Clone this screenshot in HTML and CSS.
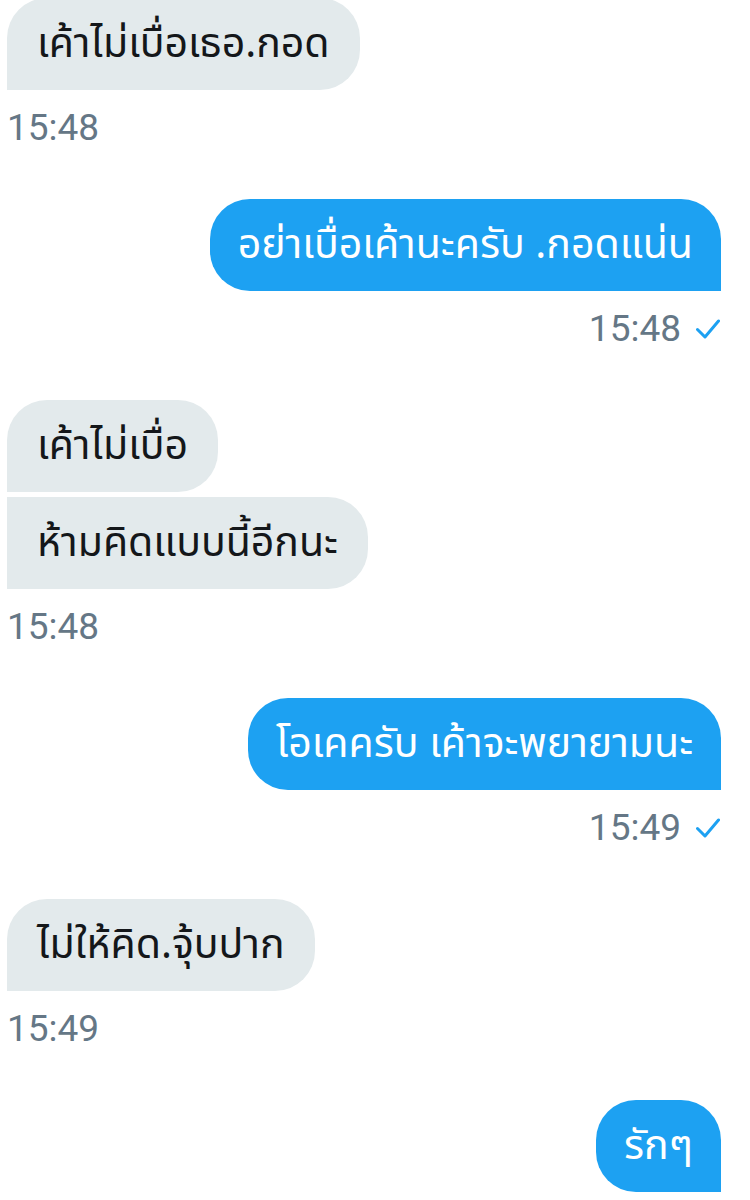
FILE: index.html
```html
<!DOCTYPE html>
<html lang="th">
<head>
<meta charset="utf-8">
<title>Chat</title>
<link rel="stylesheet" href="styles.css">
</head>
<body>
<div class="thread">
  <div class="group in">
    <div class="bubble first">เค้าไม่เบื่อเธอ.กอด</div>
    <div class="meta"><span class="time">15:48</span></div>
  </div>
  <div class="group out">
    <div class="bubble">อย่าเบื่อเค้านะครับ .กอดแน่น</div>
    <div class="meta"><span class="time">15:48</span><svg class="tick" viewBox="0 0 24 20" width="24" height="20"><path d="M1.5 10.5 L9 18 L22.5 2" fill="none" stroke="#1da1f2" stroke-width="3" stroke-linecap="round" stroke-linejoin="round"/></svg></div>
  </div>
  <div class="group in">
    <div class="bubble first">เค้าไม่เบื่อ</div>
    <div class="bubble">ห้ามคิดแบบนี้อีกนะ</div>
    <div class="meta"><span class="time">15:48</span></div>
  </div>
  <div class="group out">
    <div class="bubble">โอเคครับ เค้าจะพยายามนะ</div>
    <div class="meta"><span class="time">15:49</span><svg class="tick" viewBox="0 0 24 20" width="24" height="20"><path d="M1.5 10.5 L9 18 L22.5 2" fill="none" stroke="#1da1f2" stroke-width="3" stroke-linecap="round" stroke-linejoin="round"/></svg></div>
  </div>
  <div class="group in">
    <div class="bubble first">ไม่ให้คิด.จุ้บปาก</div>
    <div class="meta"><span class="time">15:49</span></div>
  </div>
  <div class="group out">
    <div class="bubble">รักๆ</div>
  </div>
</div>
</body>
</html>
```
FILE: styles.css
```css
html, body {
  margin: 0;
  padding: 0;
  background: #ffffff;
}
body {
  font-family: "Noto Sans Thai", "Noto Sans Thai UI", "Noto Sans", Roboto, sans-serif;
  overflow: hidden;
}
.thread {
  display: flex;
  flex-direction: column;
  gap: 51px;
  padding: 0 29px 0 7px;
  margin-top: -2px;
}
.group {
  display: flex;
  flex-direction: column;
  gap: 5px;
}
.group.in { align-items: flex-start; }
.group.out { align-items: flex-end; }
.bubble {
  box-sizing: border-box;
  height: 92px;
  display: flex;
  align-items: center;
  padding: 0 30px;
  font-size: 41px;
  line-height: 1;
  white-space: nowrap;
}
.in .bubble {
  background: #e3eaec;
  color: #14171a;
  border-radius: 0 40px 40px 0;
}
.in .bubble.first {
  border-radius: 40px 40px 40px 0;
}
.out .bubble {
  background: #1da1f2;
  color: #ffffff;
  border-radius: 40px 40px 0 40px;
  padding: 0 28px;
}
.meta {
  display: flex;
  align-items: center;
  gap: 15px;
  margin-top: 13px;
  height: 40px;
}
.time {
  font-family: Roboto, "Liberation Sans", sans-serif;
  font-size: 37px;
  line-height: 40px;
  color: #657786;
}
.tick {
  display: block;
  margin-right: 1px;
}
```
